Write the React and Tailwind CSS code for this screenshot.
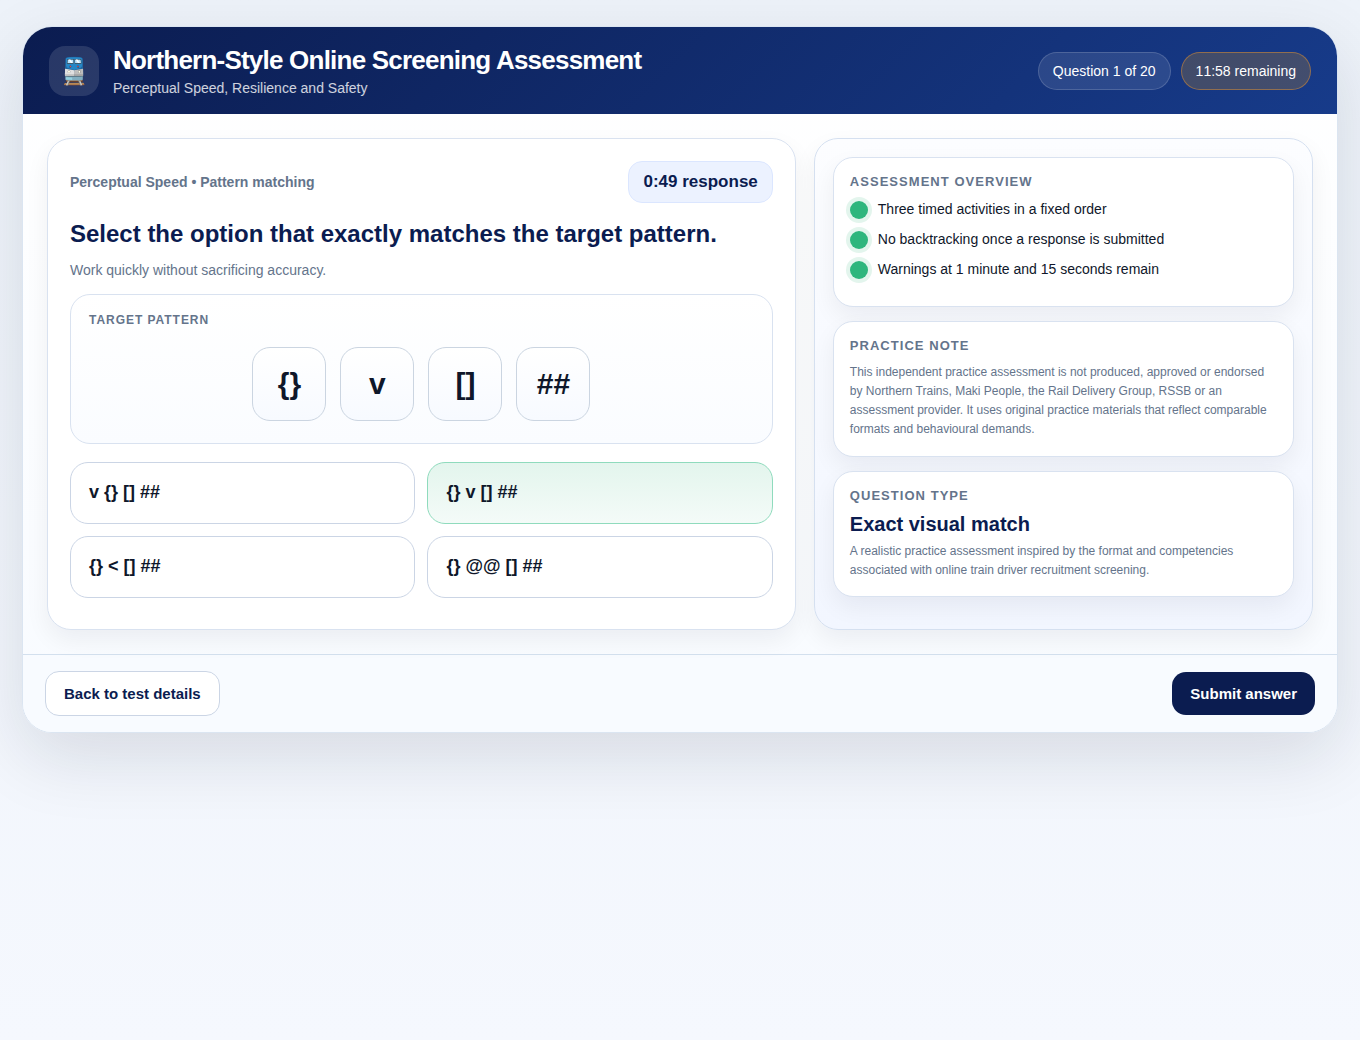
import { useState } from "react";

const target = ["{}", "v", "[]", "##"];
const options = ["v {} [] ##", "{} v [] ##", "{} < [] ##", "{} @@ [] ##"];
const overview = [
  "Three timed activities in a fixed order",
  "No backtracking once a response is submitted",
  "Warnings at 1 minute and 15 seconds remain",
];

function SideCard({ title, children }) {
  return (
    <section className="rounded-[20px] border border-[#d9e2f0] bg-white p-4 shadow-[0_10px_24px_rgba(15,23,42,0.06)]">
      <h3 className="mb-[10px] text-[13px] leading-[15px] font-bold tracking-[0.08em] text-[#64748b] uppercase">
        {title}
      </h3>
      {children}
    </section>
  );
}

export default function App() {
  const [selected, setSelected] = useState(1);

  return (
    <div className="min-h-screen bg-linear-to-b from-[#edf2f9] to-[#f5f8fe] px-[22px] py-[26px] font-['Liberation_Sans',Arial,sans-serif] text-[#0f172a]">
      <div className="overflow-hidden rounded-[30px] border border-[#dbe5f1] bg-linear-to-b from-white to-[#f8fbff] shadow-[0_24px_70px_rgba(15,23,42,0.12)]">
        <header className="flex items-center justify-between gap-4 bg-linear-135 from-[#0b1c50] to-[#173b8a] px-[26px] py-[18px] text-white">
          <div className="flex items-center gap-[14px]">
            <div className="grid size-[50px] place-items-center rounded-2xl bg-white/12 text-[26px] leading-7">
              <span role="img" aria-label="Train">🚆</span>
            </div>
            <div>
              <h1 className="text-[26px] leading-[30px] font-bold tracking-[-0.03em]">
                Northern-Style Online Screening Assessment
              </h1>
              <p className="mt-[5px] text-sm leading-4 text-white/80">
                Perceptual Speed, Resilience and Safety
              </p>
            </div>
          </div>
          <div className="flex gap-[10px] text-sm leading-4">
            <div className="rounded-full border border-white/16 bg-white/10 px-[14px] py-[10px]">
              Question 1 of 20
            </div>
            <div className="rounded-full border border-[#f59a2d]/45 bg-[#f59e0b]/20 px-[14px] py-[10px] [font-kerning:none]">
              11:58 remaining
            </div>
          </div>
        </header>

        <main className="grid min-h-[540px] grid-cols-[1.5fr_1fr] gap-[18px] p-6">
          <section className="rounded-[24px] border border-[#d9e2f0] bg-white p-[22px] shadow-[0_10px_24px_rgba(15,23,42,0.06)]">
            <div className="flex items-center justify-between">
              <div className="text-sm font-bold text-[#64748b]">
                Perceptual Speed • Pattern matching
              </div>
              <div className="rounded-[14px] border border-[#dbe6ff] bg-[#ecf2ff] px-[14px] py-[10px] text-[17px] leading-5 font-bold text-[#0b1c50]">
                0:49 response
              </div>
            </div>
            <h2 className="mt-4 text-2xl leading-[30px] font-bold text-[#0b1c50]">
              Select the option that exactly matches the target pattern.
            </h2>
            <p className="mt-[10px] text-sm leading-[22px] text-[#64748b]">
              Work quickly without sacrificing accuracy.
            </p>

            <div className="mt-[13px] rounded-[20px] border border-[#d9e2f0] bg-linear-to-b from-white to-[#fafcff] px-[18px] pt-[18px] pb-[22px]">
              <div className="text-xs leading-[14px] font-bold tracking-[0.08em] text-[#64748b] uppercase">
                Target pattern
              </div>
              <div className="mt-5 flex justify-center gap-[14px]">
                {target.map((symbol) => (
                  <div
                    key={symbol}
                    className="grid size-[74px] place-items-center rounded-[18px] border border-[#cbd5e1] bg-linear-to-b from-white to-[#f7faff] text-[30px] leading-[34px] font-bold"
                  >
                    {symbol}
                  </div>
                ))}
              </div>
            </div>

            <div className="mt-[18px] grid grid-cols-2 gap-3">
              {options.map((option, i) => (
                <button
                  key={option}
                  type="button"
                  aria-pressed={selected === i}
                  onClick={() => setSelected(i)}
                  className={`rounded-[18px] border px-[18px] pt-[18px] pb-5 text-left text-lg leading-[22px] font-bold ${
                    selected === i
                      ? "border-[#8fdbbd] bg-linear-to-b from-[#e3f5ed] to-[#f4fbf8]"
                      : "border-[#cbd5e5] bg-white"
                  }`}
                >
                  {option}
                </button>
              ))}
            </div>
          </section>

          <aside className="flex flex-col gap-[14px] rounded-[24px] border border-[#d5e0f0] bg-linear-to-b from-[#fcfdff] to-[#f2f6ff] p-[18px] shadow-[0_10px_24px_rgba(15,23,42,0.06)]">
            <SideCard title="Assessment overview">
              <ul className="pb-px">
                {overview.map((item) => (
                  <li key={item} className="mb-[10px] flex items-end gap-[10px] text-sm leading-5">
                    <span className="size-[18px] rounded-full bg-[#2eb67d] ring-4 ring-[#e3f5ed]" />
                    {item}
                  </li>
                ))}
              </ul>
            </SideCard>
            <SideCard title="Practice note">
              <p className="pb-px text-xs leading-[19px] text-[#64748b]">
                This independent practice assessment is not produced, approved or endorsed by
                Northern Trains, Maki People, the Rail Delivery Group, RSSB or an assessment
                provider. It uses original practice materials that reflect comparable formats and
                behavioural demands.
              </p>
            </SideCard>
            <SideCard title="Question type">
              <p className="text-xl leading-[22px] font-bold text-[#0b1c50]">Exact visual match</p>
              <p className="mt-[7px] text-xs leading-[19px] text-[#64748b]">
                A realistic practice assessment inspired by the format and competencies associated
                with online train driver recruitment screening.
              </p>
            </SideCard>
          </aside>
        </main>

        <footer className="flex items-center justify-between border-t border-[#d3e0ee] bg-[#f8fbff] px-[22px] py-4 text-[15px] leading-[17px] font-bold">
          <button
            type="button"
            className="rounded-[14px] border border-[#cbd5e5] bg-white px-[18px] py-[13px] text-[#0b1c50]"
          >
            Back to test details
          </button>
          <button type="button" className="rounded-[14px] bg-[#0b1c50] px-[18px] py-[13px] text-white">
            Submit answer
          </button>
        </footer>
      </div>
    </div>
  );
}
